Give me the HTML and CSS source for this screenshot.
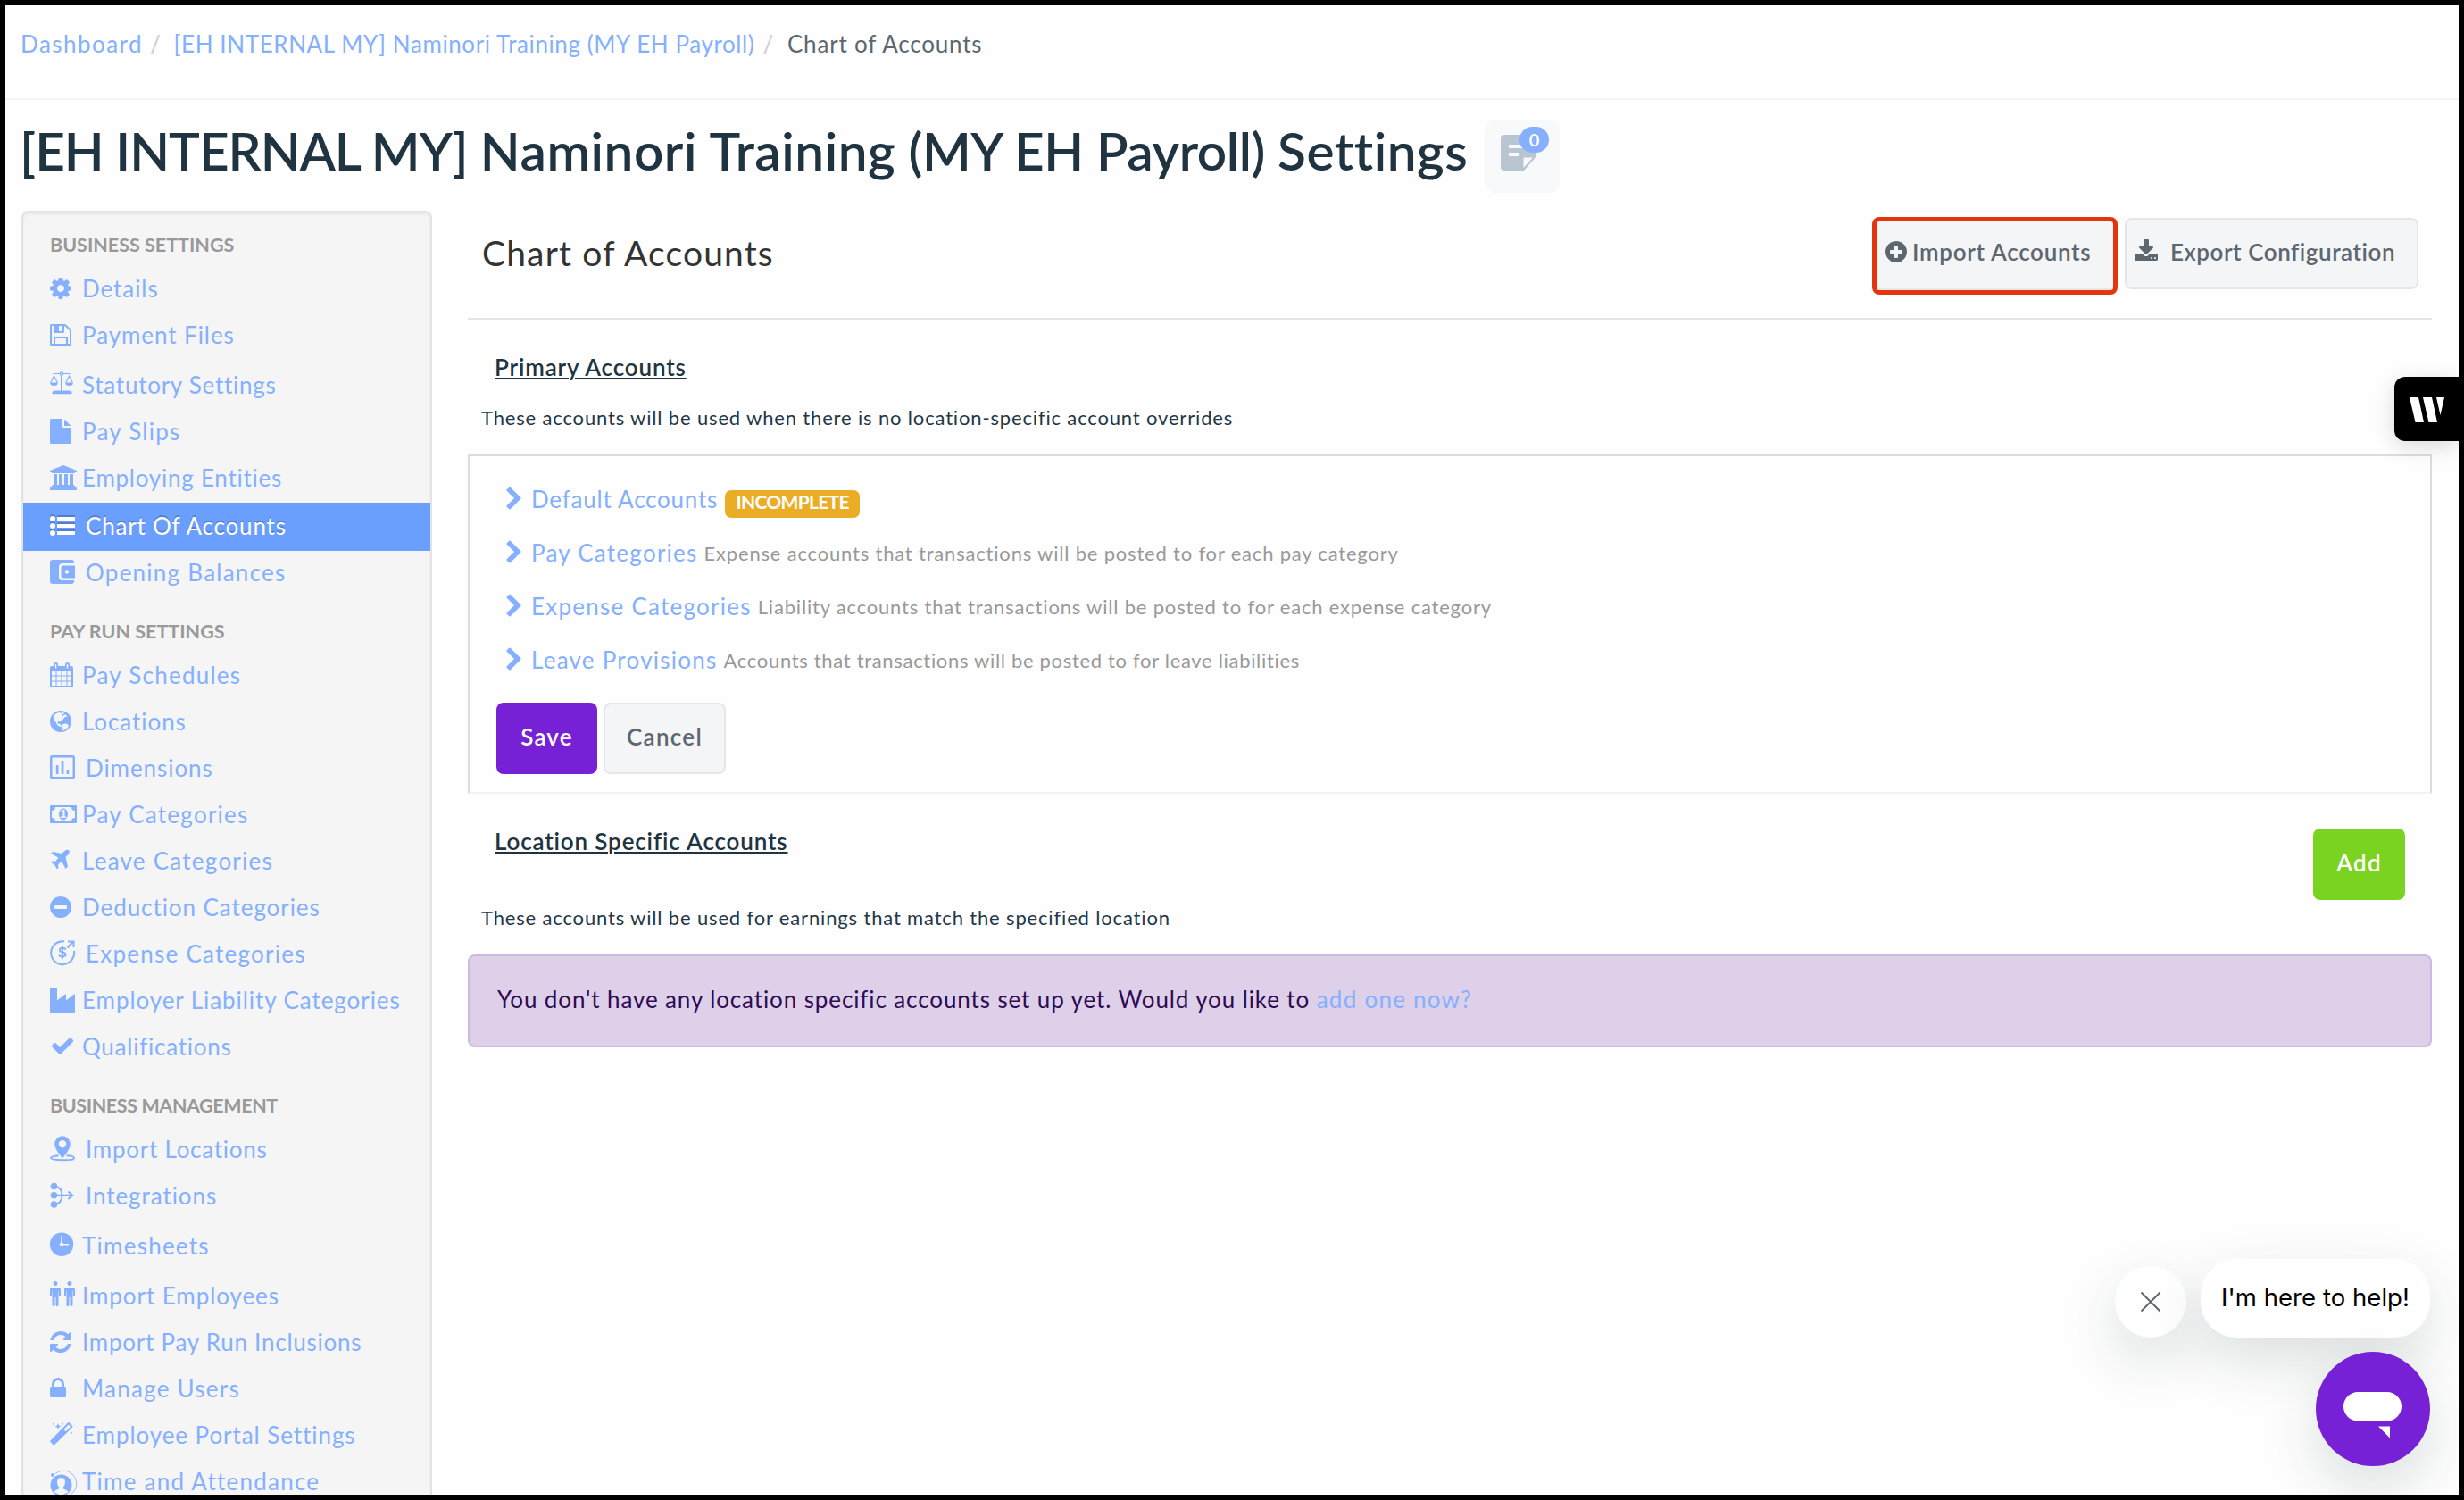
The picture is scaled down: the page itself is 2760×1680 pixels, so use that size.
FILE: index.html
```html
<!DOCTYPE html>
<html lang="en">
<head>
<meta charset="utf-8">
<title>Chart of Accounts</title>
<link rel="stylesheet" href="styles.css">
</head>
<body>
<svg class="defs" width="0" height="0">
  <symbol id="chevron" viewBox="0 0 1792 1792"><path d="M1363 877l-742 742q-19 19-45 19t-45-19l-166-166q-19-19-19-45t19-45l531-531-531-531q-19-19-19-45t19-45l166-166q19-19 45-19t45 19l742 742q19 19 19 45t-19 45z" transform="translate(0 64)"/></symbol>
</svg>
<div class="frame">
  <nav class="crumbs">
    <a class="crumb-home">Dashboard</a><span class="sep">/</span><a class="crumb-biz">[EH INTERNAL MY] Naminori Training (MY EH Payroll)</a><span class="sep sep-last">/</span><span class="current">Chart of Accounts</span>
  </nav>
  <header class="title-row">
    <h1><span class="org">[EH INTERNAL MY]</span> <span class="name">Naminori Training</span> (MY EH Payroll) <span class="name">Settings</span></h1>
    <button class="notes">
      <svg class="note-icon" viewBox="0 0 40 40"><path d="M4 0h32a4 4 0 0 1 4 4v20L26 40H4a4 4 0 0 1-4-4V4a4 4 0 0 1 4-4z"/><path class="cut" d="M9 11h21v4H9zM9 20h11v4H9zM25.500 25.500H36L25.500 37z"/></svg>
      <span class="count">0</span>
    </button>
  </header>
  <div class="content">
    <aside class="sidebar">
      <h6>BUSINESS SETTINGS</h6>
      <a class="item"><svg viewBox="0 0 32 32"><path transform="translate(-2 2) scale(.015625)" d="M1152 896q0-106-75-181t-181-75-181 75-75 181 75 181 181 75 181-75 75-181zm512-109v222q0 12-8 23t-20 13l-185 28q-19 54-39 91 35 50 107 138 10 12 10 25t-9 23q-27 37-99 108t-94 71q-12 0-26-9l-138-108q-44 23-91 38-16 136-29 186-7 28-36 28h-222q-14 0-24.5-8.5t-11.5-21.5l-28-184q-49-16-90-37l-141 107q-10 9-25 9-14 0-25-11-126-114-165-168-7-10-7-23 0-12 8-23 15-21 51-66.5t54-70.5q-27-50-41-99l-183-27q-13-2-21-12.5t-8-23.5v-222q0-12 8-23t19-13l186-28q14-46 39-92-40-57-107-138-10-12-10-24 0-10 9-23 26-36 98.5-107.5t94.5-71.5q13 0 26 10l138 107q44-23 91-38 16-136 29-186 7-28 36-28h222q14 0 24.5 8.5t11.5 21.5l28 184q49 16 90 37l142-107q9-9 24-9 13 0 25 10 129 119 165 170 7 8 7 22 0 12-8 23-15 21-51 66.5t-54 70.5q26 50 41 98l183 28q13 2 21 12.5t8 23.5z"/></svg>Details</a>
      <a class="item"><svg viewBox="0 0 32 32"><path transform="translate(-2 2) scale(.015625)" d="M512 1536h768v-384h-768v384zm896 0h128v-896q0-14-10-38.5t-20-34.5l-281-281q-10-10-34-20t-39-10v416q0 40-28 68t-68 28h-576q-40 0-68-28t-28-68v-416h-128v1280h128v-416q0-40 28-68t68-28h832q40 0 68 28t28 68v416zm-384-928v-320q0-13-9.5-22.5t-22.5-9.5h-192q-13 0-22.5 9.5t-9.5 22.5v320q0 13 9.5 22.5t22.5 9.5h192q13 0 22.5-9.5t9.5-22.5zm640 32v928q0 40-28 68t-68 28h-1344q-40 0-68-28t-28-68v-1344q0-40 28-68t68-28h928q40 0 88 20t76 48l280 280q28 28 48 76t20 88z"/></svg>Payment Files</a>
      <a class="item tall tight"><svg viewBox="0 0 32 32"><path d="M2.5 24.5q0-2 4-2h4.5v.2h1V5.5h2v17.2h1v-.2h5.500q4 0 4 2v1.700h-22zM0 13.500h9q-.5 3.500-4.500 3.500T0 13.500zM17 13.500h9q-.5 3.500-4.500 3.500t-4.500-3.500z"/><path class="ln thin" d="M3.500 3.500h7.500M15 3.500h7.500M.8 13.500L4.500 6l3.700 7.500M17.800 13.500L21.500 6l3.700 7.500"/><circle class="ln thin" cx="13" cy="3.500" r="1.700"/></svg>Statutory Settings</a>
      <a class="item loose"><svg viewBox="0 0 32 32"><path d="M1.500 2H14v8.500a1.500 1.500 0 0 0 1.500 1.500H24v16.500a1.500 1.500 0 0 1-1.500 1.500h-21A1.500 1.500 0 0 1 0 28.500v-25A1.500 1.500 0 0 1 1.500 2zM16 2.500l7.500 7.500H16z"/></svg>Pay Slips</a>
      <a class="item tight"><svg viewBox="0 0 32 32"><path d="M15 2l15 6v2h-2q0 1-1 1H3q-1 0-1-1H0V8zM4 12h4v12h2V12h4v12h2V12h4v12h2V12h4v12q2 0 2 2H2q0-2 2-2zM1 27h28q1 0 1 1v2H0v-2q0-1 1-1z"/></svg>Employing Entities</a>
      <a class="item wide active"><svg viewBox="0 0 32 32"><g class="shade"><circle cx="3" cy="6" r="3"/><circle cx="3" cy="14" r="3"/><circle cx="3" cy="22" r="3"/><path d="M8 4h20v4H8zM8 12h20v4H8zM8 20h20v4H8z"/></g><circle cx="3" cy="8" r="3"/><circle cx="3" cy="16" r="3"/><circle cx="3" cy="24" r="3"/><path d="M8 6h20v4H8zM8 14h20v4H8zM8 22h20v4H8z"/></svg>Chart Of Accounts</a>
      <a class="item wide loose"><svg viewBox="0 0 32 32"><path fill-rule="evenodd" d="M3 2h21a3 3 0 0 1 3 3v1H14a4 4 0 0 0-4 4v11a4 4 0 0 0 4 4h13v1a3 3 0 0 1-3 3H3a3 3 0 0 1-3-3V5a3 3 0 0 1 3-3zM15 8.500h13v14H15a2.500 2.500 0 0 1-2.500-2.500v-9A2.500 2.500 0 0 1 15 8.500zM19 13.300a2.200 2.200 0 1 0 .01 0z"/></svg>Opening Balances</a>

      <h6>PAY RUN SETTINGS</h6>
      <a class="item loose"><svg viewBox="0 0 32 32"><path fill-rule="evenodd" d="M2 6h2V4.500a2.500 2.500 0 0 1 5 0V6h8V4.500a2.500 2.500 0 0 1 5 0V6h2a2 2 0 0 1 2 2v20a2 2 0 0 1-2 2H2a2 2 0 0 1-2-2V8a2 2 0 0 1 2-2zM2 12v4.500h4.500V12zM7.500 12v4.500h5V12zM13.500 12v4.500h5V12zM19.500 12v4.500H24V12zM2 17.500v5h4.500v-5zM7.500 17.500v5h5v-5zM13.500 17.500v5h5v-5zM19.500 17.500v5H24v-5zM2 23.500V28h4.500v-4.500zM7.500 23.500V28h5v-4.500zM13.500 23.500V28h5v-4.500zM19.500 23.500V28H24v-4.500zM5.900 4.500v4h1.400v-4a.7.700 0 0 0-1.400 0zM18.800 4.500v4h1.400v-4a.7.700 0 0 0-1.400 0z"/></svg>Pay Schedules</a>
      <a class="item"><svg viewBox="0 0 32 32"><circle cx="12" cy="16" r="12"/><path class="cut" d="M3.500 10.500Q5.500 7.500 8.500 6.500l2.500-.5 1.500 1 2-1 1.500.5-1 1.500-2 .5 1.500 1.500 1.500-1.500 2.500.5.500 1.500-3 1-.5 1.500-2.500 1.500-1.500 2-2.500-.5-.5 1.500 1.500 1.500 1.500-.5.500 2 1.500 1.500-1 .3-4-1.800-2-4-2-1.500zM13.500 19.500l3-1 3 .5 1.500 2q-1 2.500-3.500 4L14 26.500l.5-3-1.500-2z"/></svg>Locations</a>
      <a class="item wide"><svg viewBox="0 0 32 32"><rect class="ln w25" x="1.250" y="3.250" width="25.500" height="24" rx="1.500"/><path d="M6.800 13h2.700v10H6.800zM12.700 8h2.700v15h-2.700zM18.600 18h2.700v5h-2.700z"/></svg>Dimensions</a>
      <a class="item loose"><svg viewBox="0 0 32 32"><path fill-rule="evenodd" d="M1 6h28a1 1 0 0 1 1 1v18a1 1 0 0 1-1 1H1a1 1 0 0 1-1-1V7a1 1 0 0 1 1-1zM6 8a4 4 0 0 1-4 4v8a4 4 0 0 1 4 4h18a4 4 0 0 1 4-4v-8a4 4 0 0 1-4-4z"/><ellipse cx="15" cy="16" rx="5" ry="6.500"/><path class="cut" d="M12.500 12.500l2-1.500h2v7.500h1.500V20h-6v-1.500h2.500v-5l-1.500 1z"/></svg>Pay Categories</a>
      <a class="item loose"><svg viewBox="0 0 32 32"><path d="M21.500 4.500q1 1.500-.5 4l-3.500 3.500 2.500 10.500-2.500 2.500-4.500-8.500-4 4 .5 3.500-1.500 1.500-3-5-4-2.500 1-1.500 4 .3 3.500-4L1 7.800 3.200 6 13 8l4-3.500q3-1.300 4.500 0z"/></svg>Leave Categories</a>
      <a class="item"><svg viewBox="0 0 32 32"><path fill-rule="evenodd" d="M12 4a12 12 0 1 0 .01 0zM6 14h12a1 1 0 0 1 1 1v2a1 1 0 0 1-1 1H6a1 1 0 0 1-1-1v-2a1 1 0 0 1 1-1z"/></svg>Deduction Categories</a>
      <a class="item wide loose"><svg viewBox="0 0 32 32"><path class="ln" d="M16 2.300A13 13 0 1 0 27 13"/><path class="ln" d="M19.500 9.500l6-6.500M20 2.500h6.500v6.500"/><path class="ln" d="M17.600 11.600q-.7-1.800-3.600-1.800-3 0-3 2.200 0 1.900 3 2.400 3.500.6 3.500 2.700 0 2.300-3.500 2.300-3.200 0-3.700-2M14 7.500v14.500"/></svg>Expense Categories</a>
      <a class="item"><svg viewBox="0 0 32 32"><path d="M1 2h6a1 1 0 0 1 1 1v13.500l9-7a.6.600 0 0 1 1 .5v6.500l9-7a.6.600 0 0 1 1 .5v19a1 1 0 0 1-1 1H1a1 1 0 0 1-1-1V3a1 1 0 0 1 1-1z"/></svg>Employer Liability Categories</a>
      <a class="item tight"><svg viewBox="0 0 32 32"><path transform="translate(0 1) scale(.015625)" d="M1671 566q0 40-28 68l-724 724-136 136q-28 28-68 28t-68-28l-136-136-362-362q-28-28-28-68t28-68l136-136q28-28 68-28t68 28l294 295 656-657q28-28 68-28t68 28l136 136q28 28 28 68z"/></svg>Qualifications</a>

      <h6 class="tighter">BUSINESS MANAGEMENT</h6>
      <a class="item wide tight"><svg viewBox="0 0 32 32"><path fill-rule="evenodd" d="M14 1.300a8.800 8.800 0 0 1 8.800 8.800q0 5-5.800 12.500L14 26.500l-3-3.900Q5.200 15 5.200 10.100A8.800 8.800 0 0 1 14 1.300zM14 6a4.200 4.200 0 1 0 .01 0z"/><path class="ln" d="M9.500 23.200Q1 24 1 26t13 2.300T27 26t-8.500-2.800"/></svg>Import Locations</a>
      <a class="item wide"><svg viewBox="0 0 32 32"><circle cx="4.500" cy="5.500" r="3.800"/><circle cx="4.500" cy="15.700" r="3.800"/><circle cx="4.500" cy="26" r="3.800"/><path class="ln" d="M4.500 5.500Q13.500 6 13.500 15.700T4.500 26M4.500 15.700H25M20.500 11.500l4.700 4.200-4.700 4.200"/></svg>Integrations</a>
      <a class="item tall loose"><svg viewBox="0 0 32 32"><circle cx="13" cy="14.700" r="13.200"/><path class="cut" d="M12.300 5h1.600v7.500l1.300 1.500h5.800v1.600h-5.800a2.300 2.300 0 1 1-2.900-3.200z"/></svg>Timesheets</a>
      <a class="item tall"><svg viewBox="0 0 32 32"><path d="M6 0a2.500 2.500 0 1 1-.01 0zM22 0a2.500 2.500 0 1 1-.01 0zM2.500 7h7a2.500 2.500 0 0 1 2.500 2.500V17h-2v-6h-.5v15.500q0 1.500-1.500 1.500t-1.500-1.500V18h-1v8.500Q5.500 28 4 28t-1.500-1.500V11H2v6H0V9.500A2.500 2.500 0 0 1 2.500 7zM18.500 7h7A2.500 2.500 0 0 1 28 9.500V17h-2v-6h-.5v15.500q0 1.500-1.500 1.500t-1.500-1.500V18h-1v8.500q0 1.500-1.500 1.500t-1.500-1.500V11H18v6h-2V9.500A2.500 2.500 0 0 1 18.500 7z"/></svg>Import Employees</a>
      <a class="item tight"><svg viewBox="0 0 32 32"><path transform="translate(-2 2) scale(.015625)" d="M1639 1056q0 5-1 7-64 268-268 434.500t-478 166.500q-146 0-282.500-55t-243.500-157l-129 129q-19 19-45 19t-45-19-19-45v-448q0-26 19-45t45-19h448q26 0 45 19t19 45-19 45l-137 137q71 66 161 102t187 36q134 0 250-65t186-179q11-17 53-117 8-23 30-23h192q13 0 22.500 9.500t9.500 22.500zm25-800v448q0 26-19 45t-45 19h-448q-26 0-45-19t-19-45 19-45l138-138q-148-137-349-137-134 0-250 65t-186 179q-11 17-53 117-8 23-30 23h-199q-13 0-22.500-9.500t-9.500-22.500v-7q65-268 270-434.500t480-166.500q146 0 284 55.500t245 156.500l130-129q19-19 45-19t45 19 19 45z"/></svg>Import Pay Run Inclusions</a>
      <a class="item loose"><svg viewBox="0 0 32 32"><path transform="translate(-5 2) scale(.015625)" d="M640 768h512v-192q0-106-75-181t-181-75-181 75-75 181v192zm832 96v576q0 40-28 68t-68 28h-960q-40 0-68-28t-28-68v-576q0-40 28-68t68-28h32v-192q0-184 132-316t316-132 316 132 132 316v192h32q40 0 68 28t28 68z"/></svg>Manage Users</a>
      <a class="item"><svg viewBox="0 0 32 32"><path fill-rule="evenodd" d="M21.500 2.300l3.700 3.700q.5.700 0 1.400L5 27.300q-.7.600-1.400 0L.5 24q-.6-.7 0-1.400L20.100 2.300q.7-.5 1.400 0zM20.800 4.500l-5.300 5.500 2.200 2.200L23 6.700z"/><path d="M9 3l.9 2.600 2.600.9-2.600.9L9 10l-.9-2.600-2.600-.9 2.600-.9zM4 2.500l1 1.200-1 1.200-1.200-1.200zM14 2.500l1.200 1.200L14 4.900l-1.200-1.200zM24 12.500l1.200 1.200-1.200 1.200-1.200-1.200z"/></svg>Employee Portal Settings</a>
      <a class="item loose"><svg viewBox="0 0 32 32"><circle cx="12.500" cy="20.500" r="12"/><path class="cut" d="M12.500 12q4.500 0 4.500 5 0 3.500-2 5.500v2q4 1 6 3.500l-8.500 4L4 28q2-2.500 6-3.500v-2q-2-2-2-5.500 0-5 4.500-5z"/><circle cx="3" cy="9" r="2"/><path class="ln hair" d="M6 7.500A14.500 14.500 0 1 1 21 32"/></svg>Time and Attendance</a>
    </aside>

    <main class="main">
      <div class="head">
        <h2>Chart of Accounts</h2>
        <div class="actions">
          <button class="btn import"><svg viewBox="0 0 1792 1792"><path d="M1344 960v-128q0-26-19-45t-45-19h-256v-256q0-26-19-45t-45-19h-128q-26 0-45 19t-19 45v256h-256q-26 0-45 19t-19 45v128q0 26 19 45t45 19h256v256q0 26 19 45t45 19h128q26 0 45-19t19-45v-256h256q26 0 45-19t19-45zm320-64q0 209-103 385.500t-279.500 279.500-385.500 103-385.500-103-279.500-279.500-103-385.500 103-385.500 279.500-279.500 385.500-103 385.500 103 279.500 279.500 103 385.500z"/></svg>Import Accounts</button>
          <button class="btn export"><svg viewBox="0 0 1792 1792"><path transform="translate(0 128)" d="M1344 1344q0-26-19-45t-45-19-45 19-19 45 19 45 45 19 45-19 19-45zm256 0q0-26-19-45t-45-19-45 19-19 45 19 45 45 19 45-19 19-45zm128-224v320q0 40-28 68t-68 28h-1472q-40 0-68-28t-28-68v-320q0-40 28-68t68-28h465l135 136q58 56 136 56t136-56l136-136h464q40 0 68 28t28 68zm-325-569q17 41-14 70l-448 448q-18 19-45 19t-45-19l-448-448q-31-29-14-70 17-39 59-39h256v-448q0-26 19-45t45-19h256q26 0 45 19t19 45v448h256q42 0 59 39z"/></svg>Export Configuration</button>
        </div>
      </div>

      <div class="section-head"><h3>Primary Accounts</h3></div>
      <p class="note">These accounts will be used when there is no location-specific account overrides</p>
      <div class="panel">
        <div class="acct"><svg><use href="#chevron"/></svg><a class="snug">Default Accounts</a><span class="badge">INCOMPLETE</span></div>
        <div class="acct"><svg><use href="#chevron"/></svg><a>Pay Categories</a><small>Expense accounts that transactions will be posted to for each pay category</small></div>
        <div class="acct"><svg><use href="#chevron"/></svg><a>Expense Categories</a><small>Liability accounts that transactions will be posted to for each expense category</small></div>
        <div class="acct"><svg><use href="#chevron"/></svg><a>Leave Provisions</a><small class="snug">Accounts that transactions will be posted to for leave liabilities</small></div>
        <div class="form-actions"><button class="btn save">Save</button><button class="btn cancel">Cancel</button></div>
      </div>

      <div class="section-head with-add"><h3>Location Specific Accounts</h3><button class="btn add">Add</button></div>
      <p class="note">These accounts will be used for earnings that match the specified location</p>
      <div class="alert">You don't have any location specific accounts set up yet. Would you like to <a>add one now?</a></div>
    </main>
  </div>

  <div class="side-tab"><svg viewBox="0 0 40 30"><path d="M0 1h10l6 28H6.500zM15 1h10l6 28h-9.500zM30 1h9l-4.500 20z"/></svg></div>
  <button class="chat-close"><svg viewBox="0 0 24 24"><path d="M1.500 1.500l21 21M22.500 1.500l-21 21"/></svg></button>
  <div class="chat-bubble">I'm here to help!</div>
  <button class="chat-launch"><svg viewBox="0 0 66 54"><rect x="0" y="0" width="65" height="32.500" rx="16.250"/><path d="M39 38.500h13v13z"/></svg></button>
</div>
</body>
</html>
```
FILE: styles.css
```css
* { box-sizing: border-box; }

body {
  margin: 0;
  background: #fff;
  font-family: Lato, "Open Sans", sans-serif;
  font-size: 26px;
  letter-spacing: 0.8px;
  color: #233746;
}

h1, h2, h3, h6, p { margin: 0; }
button { font: inherit; letter-spacing: inherit; border: 0; padding: 0; }
a { color: #84b0ff; }
svg { display: block; flex: none; fill: currentColor; }
.defs { position: absolute; }

.frame {
  position: relative;
  width: 2760px;
  height: 1680px;
  border: 6px solid #000;
  overflow: hidden;
  background: #fefefe;
}

/* Breadcrumbs */
.crumbs {
  display: flex;
  height: 106px;
  padding: 23px 0 0 17px;
  border-bottom: 2px solid #f4f4f5;
  line-height: 40px;
}
.crumb-home { letter-spacing: 1.45px; }
.crumb-biz { letter-spacing: 0.6px; }
.sep { color: #ccc; margin: 0 14px 0 8px; }
.sep-last { margin-left: 9px; margin-right: 15px; }
.current { color: #5c6770; }

/* Page title */
.title-row {
  display: flex;
  align-items: flex-start;
  height: 124px;
  padding: 22px 0 0 16px;
}
h1 {
  width: 1641px;
  flex: none;
  white-space: nowrap;
  font-size: 58.500px;
  line-height: 69px;
  font-weight: 600;
  letter-spacing: -0.4px;
  color: #203340;
}
.org { letter-spacing: -1px; }
.name { letter-spacing: 0.550px; }
.notes {
  position: relative;
  width: 84px;
  height: 82px;
  border-radius: 12px;
  background: #f8f9fb;
}
.note-icon { position: absolute; left: 18px; top: 17px; width: 40px; height: 40px; fill: #b9c5d0; }
.note-icon .cut { fill: #f8f9fb; }
.count {
  position: absolute;
  left: 39px;
  top: 8px;
  width: 33px;
  height: 29px;
  border-radius: 15px;
  background: #84b0ff;
  color: #fff;
  font-size: 20px;
  font-weight: 600;
  line-height: 28px;
  letter-spacing: 0;
  text-align: center;
}

.content { display: flex; align-items: flex-start; }

/* Sidebar */
.sidebar {
  flex: none;
  width: 460px;
  height: 1500px;
  margin-left: 18px;
  background: #f5f5f5;
  border: 2px solid #e3e3e3;
  border-radius: 8px;
  box-shadow: inset 0 2px 3px rgba(0, 0, 0, 0.06);
}
h6 {
  height: 63px;
  padding: 17px 0 3px 30px;
  font-size: 21.500px;
  font-weight: 700;
  line-height: 43px;
  letter-spacing: 0;
  color: #999;
}
h6:first-child { margin-top: -2px; }
h6.tighter { letter-spacing: -0.4px; }
.item {
  display: flex;
  height: 52px;
  padding-left: 30px;
  line-height: 48px;
  letter-spacing: 0.93px;
  white-space: nowrap;
}
.item svg { width: 32px; height: 32px; margin: 8px 4px 0 0; }
.item.wide svg { margin-right: 8px; }
.item.tall { height: 56px; padding-top: 4px; }
.item.loose { letter-spacing: 1.25px; }
.item.tight { letter-spacing: 0.75px; }
.item.active {
  height: 54px;
  padding-top: 2px;
  background: #6a9fff;
  color: #fff;
  letter-spacing: 0.8px;
  text-shadow: 0 -2px 0 rgba(0, 0, 0, 0.2);
}
.item .shade { fill: #000; opacity: 0.2; }
.item .cut { fill: #f5f5f5; }
.item .ln { fill: none; stroke: currentColor; stroke-width: 2; }
.item .thin { stroke-width: 1.200; }
.item .hair { stroke-width: 0.800; }
.item .w25 { stroke-width: 2.500; }

/* Main column */
.main { flex: none; width: 2200px; margin-left: 40px; }
.head {
  display: flex;
  justify-content: space-between;
  align-items: flex-start;
  height: 122px;
  padding: 0 15px 0 16px;
  border-bottom: 2px solid #e5e5e5;
}
h2 {
  padding-top: 17px;
  font-size: 39px;
  font-weight: 400;
  line-height: 60px;
  letter-spacing: 1.15px;
  color: #333;
}
.actions { display: flex; gap: 8px; }
.btn {
  display: flex;
  height: 80px;
  border: 2px solid #e3e6ec;
  border-radius: 8px;
  background: #f4f5f7;
  color: #5c6770;
  font-weight: 600;
  line-height: 72px;
}
.btn svg { width: 28px; height: 28px; }
.import {
  width: 275px;
  height: 87px;
  margin-top: 7px;
  padding-left: 8px;
  border: 5px solid #e4360c;
  box-shadow: inset 0 -2px 0 #e3e6ec;
  line-height: 68px;
  letter-spacing: 0.7px;
}
.import svg { margin: 20px 4px 0 0; }
.export { width: 329px; margin-top: 8px; padding-left: 8px; line-height: 72px; letter-spacing: 0.55px; }
.export svg { margin: 20px 13px 0 0; }

.section-head {
  display: flex;
  justify-content: space-between;
  height: 73px;
  padding: 33px 30px 0 30px;
}
.section-head.with-add { height: 124px; }
h3 {
  font-size: 26px;
  font-weight: 600;
  line-height: 40px;
  letter-spacing: 0.85px;
  color: #203340;
  text-decoration: underline;
  text-decoration-thickness: 2px;
  text-underline-offset: 2px;
}
.note {
  margin-top: 22px;
  padding-left: 15px;
  font-size: 22px;
  line-height: 30px;
  letter-spacing: 0.84px;
}
.with-add + .note { margin-top: 0; }
.panel {
  height: 380px;
  margin-top: 26px;
  padding: 18px 0 0 30px;
  border: 2px solid #ddd;
  border-bottom-color: #f2f2f2;
}
.acct { display: flex; height: 60px; line-height: 60px; white-space: nowrap; }
.acct svg { width: 28px; height: 28px; margin: 15px 5px 0 6px; color: #84b0ff; }
.acct a { letter-spacing: 1.25px; }
.acct a.snug { letter-spacing: 0.78px; }
.acct small { margin-left: 7px; padding-top: 1px; font-size: 22px; letter-spacing: 0.81px; color: #999; }
.acct small.snug { letter-spacing: 0.68px; }
.badge {
  width: 151px;
  height: 31px;
  margin: 20px 0 0 8px;
  border-radius: 7px;
  background: #ecad26;
  color: #fff;
  font-size: 21px;
  font-weight: 700;
  line-height: 25px;
  letter-spacing: -0.7px;
  text-align: center;
}
.form-actions { display: flex; gap: 7px; padding-top: 18px; }
.save, .add { justify-content: center; border: 0; color: #fff; line-height: 76px; letter-spacing: 1.200px; }
.save { width: 113px; background: #7721d6; }
.cancel { width: 137px; justify-content: center; letter-spacing: 1.300px; }
.add { width: 103px; margin-top: 6px; background: #7bd321; }

.alert {
  height: 104px;
  margin-top: 26px;
  padding-left: 31px;
  border: 2px solid #cbb9e3;
  border-radius: 8px;
  background: #ddd0e8;
  color: #2e0b53;
  line-height: 96px;
  letter-spacing: 0.89px;
}
.alert a { letter-spacing: 1.250px; }

/* Floating widgets */
.side-tab {
  position: absolute;
  right: 0;
  top: 416px;
  width: 72px;
  height: 72px;
  padding: 22px 0 0 17px;
  border-radius: 12px 0 0 12px;
  background: #000;
  box-shadow: 0 6px 24px rgba(0, 0, 0, 0.15);
}
.side-tab svg { width: 40px; height: 30px; fill: #fff; }
.chat-close, .chat-bubble, .chat-launch {
  position: absolute;
  box-shadow: 0 24px 64px rgba(9, 46, 38, 0.15);
}
.chat-close, .chat-launch { display: flex; align-items: center; justify-content: center; border-radius: 50%; }
.chat-close { left: 2363px; top: 1412px; width: 80px; height: 80px; background: #fff; }
.chat-close svg { width: 24px; height: 24px; stroke: #5f686f; stroke-width: 2; }
.chat-bubble {
  left: 2459px;
  top: 1404px;
  width: 257px;
  height: 88px;
  border-radius: 40px;
  background: #fff;
  color: #000;
  font-family: Inter, sans-serif;
  font-size: 27.500px;
  line-height: 87px;
  letter-spacing: 0.05px;
  text-align: center;
}
.chat-launch { left: 2588px; top: 1508px; width: 128px; height: 128px; background: #7721d6; color: #fff; }
.chat-launch svg { width: 66px; height: 54px; margin-top: 16px; }
```
